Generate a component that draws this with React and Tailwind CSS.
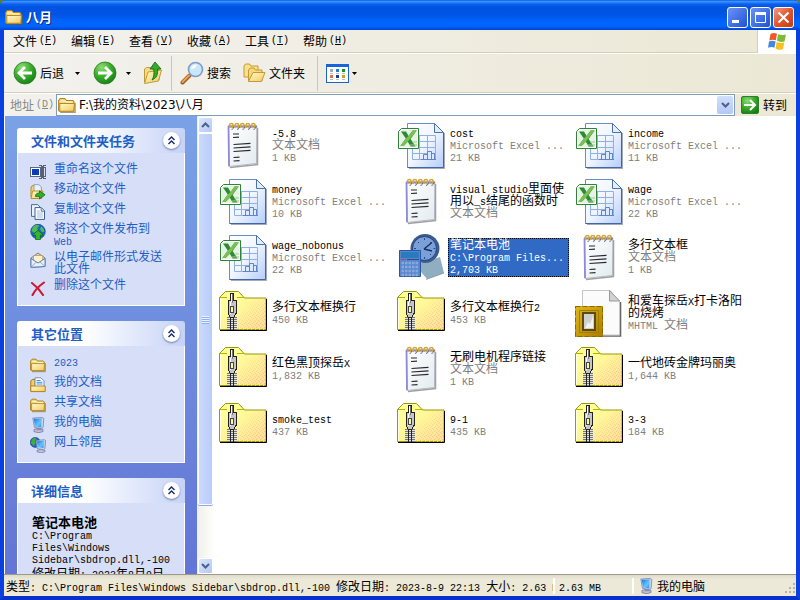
import { Fragment } from "react";

const FILES = [
  { icon: "text", name: "-5.8", lines: ["文本文档", "1 KB"] },
  { icon: "excel", name: "cost", lines: ["Microsoft Excel ...", "21 KB"] },
  { icon: "excel", name: "income", lines: ["Microsoft Excel ...", "11 KB"] },
  { icon: "excel", name: "money", lines: ["Microsoft Excel ...", "10 KB"] },
  { icon: "text", name: "visual studio里面使用以_s结尾的函数时", lines: ["文本文档"] },
  { icon: "excel", name: "wage", lines: ["Microsoft Excel ...", "22 KB"] },
  { icon: "excel", name: "wage_nobonus", lines: ["Microsoft Excel ...", "22 KB"] },
  { icon: "gadget", name: "笔记本电池", lines: ["C:\\Program Files...", "2,703 KB"], selected: true },
  { icon: "text", name: "多行文本框", lines: ["文本文档", "1 KB"] },
  { icon: "zip", name: "多行文本框换行", lines: ["450 KB"] },
  { icon: "zip", name: "多行文本框换行2", lines: ["453 KB"] },
  { icon: "mhtml", name: "和爱车探岳X打卡洛阳的烧烤", lines: ["MHTML 文档"] },
  { icon: "zip", name: "红色黑顶探岳X", lines: ["1,832 KB"] },
  { icon: "text", name: "无刷电机程序链接", lines: ["文本文档", "1 KB"] },
  { icon: "zip", name: "一代地砖金牌玛丽奥", lines: ["1,644 KB"] },
  { icon: "zip", name: "smoke_test", lines: ["437 KB"] },
  { icon: "zip", name: "9-1", lines: ["435 KB"] },
  { icon: "zip", name: "3-3", lines: ["184 KB"] },
];

const MENUS = [
  ["文件", "F"],
  ["编辑", "E"],
  ["查看", "V"],
  ["收藏", "A"],
  ["工具", "T"],
  ["帮助", "H"],
];

// Latin runs are set in a half-width mono so they take half a CJK cell
function T({ children }) {
  const runs = children.match(/[\x20-\x7e]+|[^\x20-\x7e]+/g) || [];
  return runs.map((run, i) =>
    /^[\x20-\x7e]/.test(run) ? (
      <span key={i} className="font-['Liberation_Mono',monospace] text-[10px] leading-none">{run}</span>
    ) : (
      <Fragment key={i}>{run}</Fragment>
    )
  );
}

/* ---------- icons ---------- */

function Defs() {
  return (
    <svg width="0" height="0" className="absolute" aria-hidden="true">
      <defs>
        <linearGradient id="folder" x1="0" y1="0" x2="1" y2="1">
          <stop offset="0" stopColor="#fffbd0" />
          <stop offset="1" stopColor="#f3c95c" />
        </linearGradient>
        <linearGradient id="sheet" x1="0" y1="0" x2="1" y2="1">
          <stop offset="0" stopColor="#ffffff" />
          <stop offset="0.5" stopColor="#f0f5ff" />
          <stop offset="1" stopColor="#b4cdfa" />
        </linearGradient>
        <linearGradient id="paper" x1="0" y1="0" x2="1" y2="1">
          <stop offset="0" stopColor="#ffffff" />
          <stop offset="1" stopColor="#e2ebef" />
        </linearGradient>
        <radialGradient id="green" cx="0.35" cy="0.25" r="0.8">
          <stop offset="0" stopColor="#8fdc78" />
          <stop offset="0.5" stopColor="#3caf2c" />
          <stop offset="1" stopColor="#148014" />
        </radialGradient>
        <linearGradient id="screen" x1="0" y1="0" x2="1" y2="1">
          <stop offset="0" stopColor="#1a76e0" />
          <stop offset="0.6" stopColor="#62c6ff" />
          <stop offset="1" stopColor="#2a90ea" />
        </linearGradient>
        <linearGradient id="gold" x1="0" y1="0" x2="1" y2="1">
          <stop offset="0" stopColor="#e0b81a" />
          <stop offset="0.5" stopColor="#c79a0a" />
          <stop offset="1" stopColor="#a87c00" />
        </linearGradient>
        <linearGradient id="zipBody" x1="0.3" y1="0.2" x2="1" y2="1">
          <stop offset="0" stopColor="#ffff99" />
          <stop offset="1" stopColor="#ffdf99" />
        </linearGradient>
        <pattern id="dither" width="4" height="4" patternUnits="userSpaceOnUse">
          <path d="M0 0h1v1h-1zM2 1h1v1h-1zM1 2h1v1h-1zM3 3h1v1h-1z" fill="#ffbf8c" />
        </pattern>
        <linearGradient id="fadeIn" x1="0.3" y1="0.2" x2="0.9" y2="0.9">
          <stop offset="0" stopColor="#000" />
          <stop offset="0.5" stopColor="#888" />
          <stop offset="1" stopColor="#fff" />
        </linearGradient>
        <mask id="ditherMask">
          <rect x="19" y="9" width="28" height="32" fill="url(#fadeIn)" />
        </mask>
      </defs>
    </svg>
  );
}

function FolderIcon({ size = 16 }) {
  return (
    <svg width={size} height={size} viewBox="0 0 16 16" className="shrink-0">
      <path d="M2 14.700h13.300V6" fill="none" stroke="#6d5a2a" strokeOpacity=".6" />
      <path d="M.6 13V4L2 2.200h4L7.600 4h5.600l1 1v8.600H1.600z" fill="#f6d77c" stroke="#b0821a" />
      <path d="M1.600 6.600h13l-.6 7H1.600z" fill="url(#folder)" stroke="#b88a22" strokeWidth=".9" />
      <path d="M2.200 4.500h4.300l1 .9h5.400" fill="none" stroke="#fffbe0" strokeWidth=".9" />
    </svg>
  );
}

function DocsIcon() {
  return (
    <svg width="16" height="16" viewBox="0 0 16 16" className="shrink-0">
      <path d="M.8 14V4l1.400-1.600h3V14z" fill="#f3cd63" stroke="#a87812" />
      <path d="M5 .8h6l3 3V12H5z" fill="#fff" stroke="#6486c0" strokeWidth=".9" />
      <path d="M6.500 3.500h4M6.500 5.300h6M6.500 7h6" stroke="#3a90e0" />
      <path d="M.8 9h14.400v5.600H.8z" fill="url(#folder)" stroke="#b0821a" />
    </svg>
  );
}

function ComputerIcon() {
  return (
    <svg width="16" height="16" viewBox="0 0 16 16" className="shrink-0">
      <path d="M4 12.500L9 11l4 1.500v2L9 15.700l-5-1z" fill="#c3c0da" stroke="#79759c" strokeWidth=".8" />
      <path d="M7 10.500h4l.8 2.700H6.600z" fill="#8f8bb5" />
      <path d="M2.800 1L12 .5l1.800.9-.7 9.200-1.700 1-6.900-1.200z" fill="#cdd4ea" stroke="#7a84b0" strokeWidth=".8" />
      <path d="M3.700 1.800l8-.4-.5 9-6.200-.9z" fill="url(#screen)" />
    </svg>
  );
}

function NetworkIcon() {
  return (
    <svg width="16" height="16" viewBox="0 0 16 16" className="shrink-0">
      <circle cx="5.200" cy="5.400" r="5" fill="#1e62cc" stroke="#123f8a" strokeWidth=".6" />
      <path d="M2 2.400c2-2 4.400-1.600 4.400-.4L4.800 4l1 2-2 3-3-3z" fill="#3fae3c" />
      <path d="M7 13.400l4-1 4 1v1.400l-4 1-4-1z" fill="#c3c0da" stroke="#79759c" strokeWidth=".7" />
      <path d="M6 3.400l8.400-.6 1.200.8-.7 8-1.400 1.100-6.200-1z" fill="#cdd4ea" stroke="#747eac" strokeWidth=".8" />
      <path d="M6.900 4.200l7.100-.4-.5 7.200-5.500-.7z" fill="url(#screen)" />
    </svg>
  );
}

function RenameIcon() {
  return (
    <svg width="16" height="16" viewBox="0 0 16 16" className="shrink-0" shapeRendering="crispEdges">
      <path d="M.5 3.500h10v9H.5z" fill="#fff" stroke="#5f6678" />
      <path d="M2 5h7v6H2z" fill="#0a3cc0" />
      <path d="M9 1h3v1h1V1h3v1h-2v12h2v1h-3v-1h-1v1H9v-1h2V2H9z" fill="#5a6072" />
      <path d="M14 3.500h1.500v9H14" fill="none" stroke="#5f6678" />
    </svg>
  );
}

function MoveIcon() {
  return (
    <svg width="16" height="16" viewBox="0 0 16 16" className="shrink-0">
      <path d="M1 13V3l2-1.600h3L7.400 3H11v10z" fill="#f5d67a" stroke="#b98a1c" />
      <path d="M4 .7h5L11.400 3V9H4z" fill="#e9f1fc" stroke="#7c93b8" strokeWidth=".8" />
      <path d="M1 14.500L2.600 7H13l-1.400 7.500z" fill="url(#folder)" stroke="#b98a1c" strokeWidth=".9" />
      <path d="M5.500 12.400c0-2.600 1.500-3.400 4-3.400V6.800l5.600 4-5.600 4.200v-2.500c-1.800 0-2.800.3-4-.1z" fill="#2fae2a" stroke="#0f6d14" strokeWidth=".8" />
    </svg>
  );
}

function CopyIcon() {
  return (
    <svg width="16" height="16" viewBox="0 0 16 16" className="shrink-0">
      <path d="M1.500.6h6.200L10 3v9.400H1.500z" fill="#e9f1fb" stroke="#4f6f98" />
      <path d="M5 3.600h6.400l3.100 3.200v8.600H5z" fill="#fff" stroke="#3e5f8c" />
      <path d="M11.200 4v3.200h3.200" fill="#cfe0f4" stroke="#3e5f8c" strokeWidth=".8" />
      <path d="M6.800 7h3M6.800 9h6M6.800 11h6M6.800 13h6" stroke="#8fb4dc" strokeWidth=".9" />
    </svg>
  );
}

function PublishIcon() {
  return (
    <svg width="16" height="16" viewBox="0 0 16 16" className="shrink-0">
      <circle cx="8" cy="7.600" r="7.300" fill="#1f66d0" stroke="#143f8c" strokeWidth=".7" />
      <path d="M3 3c3-3 6-2 6.400-1L7 4l1 2-3 3-3.600-2zM11 2.400c2 1 3.600 3 3.400 5.400L12 8l-2-3z" fill="#4cc04a" />
      <path d="M8 6.200l5.400 5h-3v4.400H5.600v-4.400h-3z" fill="#36b52e" stroke="#0d6a12" strokeWidth=".8" />
    </svg>
  );
}

function MailIcon() {
  return (
    <svg width="16" height="16" viewBox="0 0 16 16" className="shrink-0">
      <path d="M1 6l7-5 7 5v8.500l-14 .8z" fill="#c9d8ee" stroke="#5877aa" strokeWidth=".9" />
      <path d="M3.500 3.500h9.200V9L8 11 3.500 9z" fill="#fff2c4" stroke="#c8962a" strokeWidth=".8" />
      <path d="M1 6.500L8 11l7-4.500v8l-14 .8z" fill="#e6effb" stroke="#5877aa" strokeWidth=".9" />
      <path d="M1.200 15l5.200-5M14.800 14.300L10 10" stroke="#7d9bc8" strokeWidth=".8" />
    </svg>
  );
}

function DeleteIcon() {
  return (
    <svg width="16" height="16" viewBox="0 0 16 16" className="shrink-0">
      <path d="M2 3c4 3 8 7 11 12M14 2.500C9 6 5 10 2.500 15" fill="none" stroke="#cf1632" strokeWidth="2.100" strokeLinecap="round" />
    </svg>
  );
}

function ExcelFileIcon() {
  return (
    <svg width="48" height="48" viewBox="0 0 48 48" className="shrink-0">
      <path d="M12 47.500h35.500V12" fill="none" stroke="#33415f" strokeOpacity=".45" />
      <path d="M10.500 2.500h27l9 9v35h-36z" fill="url(#sheet)" stroke="#6a8fc4" />
      <path d="M46.500 11.500v35h-36" fill="none" stroke="#3f67a8" />
      <path d="M37.500 2.500v9h9z" fill="#e3edfc" stroke="#4b72ae" />
      <path d="M15.500 14.500h23v24h-23zM15.500 20.500h23M15.500 26.500h23M15.500 32.500h23M22.500 14.500v24M30.500 14.500v24" fill="none" stroke="#8fb0e4" />
      <path d="M26.500 38.500v-5h4v5M30.500 38.500v-8h4v8M34.500 38.500v-6h3v6M24 38.500h15" fill="#dce9ff" stroke="#5d86ca" />
      <path d="M4.500 7.500h17v20h-20v-17z" fill="#fff" stroke="#2d8338" />
      <path d="M5 9h15v17H3V11z" fill="#e7f3e2" />
      <path d="M4 10.500h5l2.600 4.500 4-5.500h4l-6 8.500 5 7.500h-5l-2.800-4.800L6.500 25H3.400l5.400-7.500z" fill="#2b8c34" />
      <path d="M11.600 15l4-5.500h4L10.800 20.700 6.500 25H3.400l5.400-7.500z" fill="#7cbf53" />
      <path d="M13 24h7M15 21h5" stroke="#9fcb92" />
    </svg>
  );
}

function TextFileIcon() {
  return (
    <svg width="48" height="48" viewBox="0 0 48 48" className="shrink-0">
      <path d="M11 46.500l27.500-3V7" fill="none" stroke="#444" strokeOpacity=".5" strokeWidth="1.500" />
      <path d="M9.500 5h28.300l-.3 37.500-27.500 3z" fill="url(#paper)" stroke="#a6a8b2" strokeWidth=".8" />
      <path d="M9.500 5l.5 40" stroke="#8f8ad8" strokeWidth="1.800" />
      <path d="M9 5.500h29" stroke="#8d87cf" strokeWidth="2" />
      {[0, 1, 2, 3, 4].map((i) => (
        <g key={i} transform={`translate(${i * 5.5} 0)`} fill="none">
          <path d="M14.500 4.500c1 2-.5 4-2 3.800" stroke="#5a52a0" />
          <path d="M11.500 6.500c-2-.5-1.500-4 1-4 2 0 2.200 3 .5 4.300" stroke="#d2a92c" strokeWidth="1.500" />
        </g>
      ))}
      <path d="M14 13h6M14 16.500l6-.3M14.500 23.500l17-1.200M14.500 27l17-1.200M14.500 30.500l17-1.200M14.500 36.500l6-.4M14.500 40l6-.4" stroke="#26292c" strokeWidth="1.200" />
    </svg>
  );
}

function ZipIcon() {
  return (
    <svg width="48" height="48" viewBox="0 0 48 48" className="shrink-0">
      <path d="M.5 40.500V8.500l6-6h13l6 6.500h21.500v31.500z" fill="url(#zipBody)" stroke="#999900" />
      <path d="M1.500 9v31" stroke="#ffffe0" />
      <path d="M19 9h28v32H19z" fill="url(#dither)" mask="url(#ditherMask)" />
      <path d="M1 8.500h7M18 8.500h8" stroke="#b3b300" />
      <path d="M1 41.500h46.500V10" fill="none" stroke="#000" />
      <g shapeRendering="crispEdges">
        <path d="M8 28h10v13H8z" fill="#e4e4d8" />
        <path d="M8 28.500h10M8 30.500h10M8 32.500h10M8 34.500h10M8 36.500h10M8 38.500h10M8 40.500h10" stroke="#777" />
        <path d="M11.500 28v13M14.500 28v13" stroke="#222" />
        <path d="M10.500 11.500h1v-7h3v7h2.500v13l-2 3.500h-4l-2-3.500 0-13z" fill="#c6c6c6" stroke="#222" />
        <path d="M11 13h1v12h-1zM12 5h1v8h-1z" fill="#fff" />
        <path d="M11.500 17.500h3v6h-3z" fill="#f8f8a8" stroke="#444" />
        <path d="M13 5h1v9h-1z" fill="#777" />
      </g>
    </svg>
  );
}

function MhtmlIcon() {
  return (
    <svg width="48" height="48" viewBox="0 0 48 48" className="shrink-0">
      <path d="M9 47h36.500V13" fill="none" stroke="#666" strokeWidth="1.600" />
      <path d="M7.500 1.500H35L44.500 12v34h-37z" fill="#fbfbfb" stroke="#c6c6c6" />
      <path d="M34.500 1.500V12h10z" fill="#d2d2d2" stroke="#999" />
      <path d="M0 17h28v31H0z" fill="url(#gold)" />
      <path d="M.5 17.500h27v30H.5z" fill="none" stroke="#8a6700" strokeDasharray="5 2" />
      <path d="M4.500 21.500h19v22h-19z" fill="none" stroke="#a37c05" />
      <path d="M8 24h12v17H8z" fill="#cfcfcf" stroke="#5e4a0c" strokeWidth="2" />
      <path d="M10 39l3-6 2 2 3-8v12z" fill="#f2f2f2" />
    </svg>
  );
}

function GadgetIcon() {
  return (
    <svg width="48" height="48" viewBox="0 0 48 48" className="shrink-0">
      <path d="M24 30l19-6 4 16-17 6-6-7z" fill="#8fafc0" />
      <path d="M29 46.500l18-6.500" stroke="#5d7c96" strokeOpacity=".6" />
      <circle cx="28" cy="15.500" r="14.500" fill="#3b5c90" />
      <circle cx="27.500" cy="15.500" r="12" fill="#7ba0d8" stroke="#24427c" />
      <path d="M27 16l8-6.500M27 16l8 2" stroke="#17305f" strokeWidth="1.400" />
      <path d="M27.500 5v2M27.500 24v2M17 15.500h2M36.500 15.500h2M21 9l1 1M34 9l-1 1M21 22l1-1M34 22l-1-1" stroke="#2a4a85" />
      <path d="M2.500 17.500h21v26h-21z" fill="#5a86cc" stroke="#2a57a2" />
      <path d="M4 19h18v6H4z" fill="#2a7ac0" />
      <path d="M4 26.500h5" stroke="#a74a72" />
      <path d="M10 26.500h12" stroke="#2c4d8c" />
      {[30, 34, 38, 42].map((y) => (
        <path key={y} d={`M4.500 ${y}h17`} stroke="#86aae0" strokeWidth="2.400" strokeDasharray="2.500 1" />
      ))}
    </svg>
  );
}

const FILE_ICONS = {
  text: TextFileIcon,
  excel: ExcelFileIcon,
  zip: ZipIcon,
  mhtml: MhtmlIcon,
  gadget: GadgetIcon,
};

function ArrowCircle({ back }) {
  return (
    <svg width="24" height="24" viewBox="0 0 24 24" className="shrink-0">
      <circle cx="12" cy="12" r="11" fill="url(#green)" stroke="#2c7a28" strokeWidth=".8" />
      <path
        d={back ? "M19 12H7M12 6l-6 6 6 6" : "M5 12h12M12 6l6 6-6 6"}
        fill="none"
        stroke="#fff"
        strokeWidth="2.800"
      />
    </svg>
  );
}

function UpFolderIcon() {
  return (
    <svg width="20" height="24" viewBox="0 0 20 24" className="shrink-0">
      <path d="M1.500 21V8l2-1.500h4L9 8h7v11z" fill="#f6dc86" stroke="#c19a3a" />
      <path d="M1.500 22.500L5 11l13.500-2-3 11z" fill="url(#folder)" stroke="#c19a3a" />
      <path d="M12 1l6 7h-3.500c.5 6-1 9-5.500 11 2-3 2.200-6 1.800-11H7z" fill="#35ac2c" stroke="#147018" strokeWidth=".9" />
    </svg>
  );
}

function SearchIcon() {
  return (
    <svg width="24" height="24" viewBox="0 0 24 24" className="shrink-0">
      <path d="M2.500 21.500l7-7" stroke="#9c5a22" strokeWidth="4" strokeLinecap="round" />
      <path d="M2.500 21l6.500-6.500" stroke="#f0a257" strokeWidth="2" strokeLinecap="round" />
      <circle cx="15.500" cy="8.500" r="7" fill="#c9e7fb" stroke="#7f9cc4" strokeWidth="1.600" />
      <path d="M11 8a5 5 0 0 1 6-4.500c-1 3-3 4.500-6 4.500z" fill="#fff" />
    </svg>
  );
}

function FoldersIcon() {
  return (
    <svg width="23" height="20" viewBox="0 0 23 20" className="shrink-0">
      <path d="M1 14V3l1.500-2h4L8 3h7v11z" fill="#f8e08e" stroke="#c59a34" />
      <path d="M5.500 18V7L7 5h4l1.500 2H19v11z" fill="#f6d77c" stroke="#c59a34" />
      <path d="M5.500 18.500L10 9.500h12l-3.500 9z" fill="url(#folder)" stroke="#c59a34" />
    </svg>
  );
}

function ViewsIcon() {
  return (
    <svg width="23" height="19" viewBox="0 0 23 19" className="shrink-0" shapeRendering="crispEdges">
      <path d="M.5.500h22v18H.5z" fill="#fff" stroke="#1c62cc" />
      <path d="M0 0h23v3H0z" fill="#1a63d8" />
      <path d="M4 5h3v3H4z" fill="#a9a5bd" />
      <path d="M10 5h3v3h-3z" fill="#1f7ad8" />
      <path d="M16 5h3v3h-3z" fill="#168f35" />
      <path d="M4 11h3v3H4z" fill="#e8703a" />
      <path d="M10 11h3v3h-3z" fill="#143a94" />
      <path d="M16 11h3v3h-3z" fill="#cfa01e" />
      <path d="M4 9.500h3M10 9.500h3M16 9.500h3M4 15.500h3M10 15.500h3M16 15.500h3" stroke="#b9bcc9" />
    </svg>
  );
}

function FlagIcon() {
  return (
    <svg width="20" height="19" viewBox="0 0 20 19">
      <path d="M3.500 2C6 .5 8 .8 10 1.800L8.800 8.300C6.500 7.500 4.500 7.500 2.300 8.500z" fill="#ee5a26" />
      <path d="M11 2.200c2.500 1 5 1 8 .2l-1.500 7c-2.500.8-5 .6-7.500-.6z" fill="#7cbb35" />
      <path d="M2 9.500c2.500-1 4.500-.8 6.600 0l-1.200 6.300c-2.200-1-4.200-.9-6.400 0z" fill="#4289e4" />
      <path d="M9.700 10c2.500 1.100 5 1.200 7.600.5L16 17c-2.500 1-5 .8-7.500-.6z" fill="#f8c01c" />
    </svg>
  );
}

function Caret() {
  return (
    <svg width="5" height="3" viewBox="0 0 5 3" className="shrink-0">
      <path d="M0 0h5L2.500 3z" fill="#000" />
    </svg>
  );
}

function Chevron({ up }) {
  return (
    <svg width="9" height="6" viewBox="0 0 9 6">
      <path d={up ? "M1 5l3.500-3.500L8 5" : "M1 1l3.500 3.500L8 1"} fill="none" stroke="#4d6185" strokeWidth="2" />
    </svg>
  );
}

/* ---------- window parts ---------- */

const captionButton = "flex h-[21px] w-[21px] items-center justify-center rounded-[3px] border border-white";

function TitleBar() {
  return (
    <header className="flex h-[30px] shrink-0 items-center rounded-t-md bg-[linear-gradient(180deg,#0a5be8_0%,#3a92ff_5%,#0a60ee_14%,#0052e0_25%,#0055e6_50%,#0066ff_75%,#0064fb_88%,#0043cf_100%)] pt-1 pr-1.5 pl-[5px]">
      <FolderIcon size={18} />
      <h1 className="flex-1 pl-[3px] text-[13px] leading-4 font-bold text-white [text-shadow:1px_1px_0_#0a2a80]">八月</h1>
      <div className="flex gap-0.5">
        <button aria-label="最小化" className={`${captionButton} bg-linear-to-br from-[#6c93f4] to-[#1f50d8]`}>
          <svg width="13" height="13" viewBox="0 0 13 13">
            <path d="M1 9h7v3H1z" fill="#fff" />
          </svg>
        </button>
        <button aria-label="最大化" className={`${captionButton} bg-linear-to-br from-[#6c93f4] to-[#1f50d8]`}>
          <svg width="13" height="13" viewBox="0 0 13 13">
            <path d="M1.500 2.500h10v9h-10z" fill="none" stroke="#fff" />
            <path d="M1 1h11v3H1z" fill="#fff" />
          </svg>
        </button>
        <button aria-label="关闭" className={`${captionButton} bg-linear-to-br from-[#f09a80] via-[#e2542c] to-[#c63a10]`}>
          <svg width="13" height="13" viewBox="0 0 13 13">
            <path d="M1.500 1.500l10 10M11.500 1.500l-10 10" stroke="#fff" strokeWidth="2.200" />
          </svg>
        </button>
      </div>
    </header>
  );
}

const barBg = "bg-linear-to-r from-[#f2f1ee] to-[#ece8d5]";

function MenuBar() {
  return (
    <nav className={`flex h-6 shrink-0 border-b border-white ${barBg}`}>
      <div className="flex flex-1 border-b border-[#d5cfba] pl-px">
        {MENUS.map(([label, key]) => (
          <button key={key} className="flex w-[58px] items-center gap-0.5 pl-2 leading-4 whitespace-nowrap">
            {label}
            <span className="font-['Liberation_Mono',monospace] text-[10px]">
              (<u>{key}</u>)
            </span>
          </button>
        ))}
      </div>
      <div className="flex w-[39px] items-center justify-center border-l border-[#d5cfba] bg-white">
        <FlagIcon />
      </div>
    </nav>
  );
}

function Toolbar() {
  return (
    <div className={`h-10 shrink-0 border-b border-white ${barBg}`}>
      <div className="flex h-full items-center border-b border-[#d5cfba] pl-[9px] leading-4 whitespace-nowrap">
        <button className="flex items-center gap-[3px]">
          <ArrowCircle back />
          后退
        </button>
        <button aria-label="后退选项" className="flex w-[26px] justify-center">
          <Caret />
        </button>
        <button aria-label="前进" className="ml-[3px]">
          <ArrowCircle />
        </button>
        <button aria-label="前进选项" className="flex w-[22px] justify-center">
          <Caret />
        </button>
        <button aria-label="向上" className="ml-1">
          <UpFolderIcon />
        </button>
        <div className="mx-2 h-[35px] w-px bg-[#cdc7b0]" />
        <button className="flex items-center gap-[3px]">
          <SearchIcon />
          搜索
        </button>
        <button className="ml-3 flex items-center gap-[3px]">
          <FoldersIcon />
          文件夹
        </button>
        <div className="mr-2 ml-3 h-[35px] w-px bg-[#cdc7b0]" />
        <button aria-label="查看" className="flex items-center gap-[3px]">
          <ViewsIcon />
          <Caret />
        </button>
      </div>
    </div>
  );
}

function AddressBar() {
  return (
    <div className={`flex h-[22px] shrink-0 items-center leading-4 ${barBg}`}>
      <label htmlFor="address" className="flex w-[52px] items-center gap-0.5 pl-1.5 whitespace-nowrap text-[#8a887c]">
        地址
        <span className="font-['Liberation_Mono',monospace] text-[10px]">
          (<u>D</u>)
        </span>
      </label>
      <div className="flex h-full flex-1 items-center border border-[#7f9db9] bg-white px-px">
        <FolderIcon size={18} />
        <input
          id="address"
          defaultValue="F:\我的资料\2023\八月"
          className="min-w-0 flex-1 pl-[3px] font-['DejaVu_Sans','Noto_Sans_CJK_SC',sans-serif] leading-4 outline-none"
        />
        <button aria-label="展开地址" className="flex h-[18px] w-4 items-center justify-center rounded-xs bg-linear-to-b from-[#d0dffc] to-[#b3c8f5]">
          <Chevron />
        </button>
      </div>
      <button className="flex w-[61px] items-center gap-1 pl-1.5 whitespace-nowrap">
        <svg width="18" height="18" viewBox="0 0 18 18" className="shrink-0">
          <rect x=".5" y=".5" width="17" height="17" rx="1.500" fill="url(#green)" stroke="#2f7d2c" />
          <path d="M3 9h11M9 4l5 5-5 5" fill="none" stroke="#fff" strokeWidth="2" />
        </svg>
        转到
      </button>
    </div>
  );
}

// compact text blocks: mono first in the stack keeps every line at 12px
const compactText = "font-['Liberation_Mono','Noto_Sans_CJK_SC',monospace] leading-3";

function Panel({ title, children }) {
  return (
    <section>
      <div className="flex h-[25px] items-center justify-between rounded-t-[3px] bg-linear-to-r from-white from-40% to-[#c6d3f7] pr-[5px] pl-3.5">
        <h2 className="text-[13px] leading-4 font-bold text-[#215dc6]">{title}</h2>
        <button aria-label={`折叠${title}`} className="flex h-[17px] w-[17px] items-center justify-center rounded-full bg-white shadow-[0_1px_2px_#6c7cae]">
          <svg width="9" height="9" viewBox="0 0 9 9">
            <path d="M1.500 4L4.500 1l3 3M1.500 8L4.500 5l3 3" fill="none" stroke="#15296b" strokeWidth="1.400" />
          </svg>
        </button>
      </div>
      <div className={`border border-t-0 border-white bg-[#d6dff7] ${compactText}`}>{children}</div>
    </section>
  );
}

function LinkList({ items }) {
  return (
    <ul className="flex flex-col gap-1 pt-[11px] pr-[19px] pb-[9px] pl-3">
      {items.map(([Icon, label]) => (
        <li key={label}>
          <a href="#" className="flex min-h-4 items-start gap-2 text-[#215dc6]">
            <Icon />
            <span>
              <T>{label}</T>
            </span>
          </a>
        </li>
      ))}
    </ul>
  );
}

function Sidebar() {
  return (
    <aside className="ml-px flex w-48 shrink-0 flex-col gap-[15px] overflow-hidden bg-linear-to-b from-[#7ba2e7] to-[#6375d6] px-3 pt-3">
      <Panel title="文件和文件夹任务">
        <LinkList
          items={[
            [RenameIcon, "重命名这个文件"],
            [MoveIcon, "移动这个文件"],
            [CopyIcon, "复制这个文件"],
            [PublishIcon, "将这个文件发布到Web"],
            [MailIcon, "以电子邮件形式发送此文件"],
            [DeleteIcon, "删除这个文件"],
          ]}
        />
      </Panel>
      <Panel title="其它位置">
        <LinkList
          items={[
            [FolderIcon, "2023"],
            [DocsIcon, "我的文档"],
            [FolderIcon, "共享文档"],
            [ComputerIcon, "我的电脑"],
            [NetworkIcon, "网上邻居"],
          ]}
        />
      </Panel>
      <Panel title="详细信息">
        <div className="pt-[15px] pr-3 pb-3 pl-3.5">
          <h3 className="text-[13px] leading-3 font-bold">笔记本电池</h3>
          <p>
            <T>{"C:\\Program Files\\Windows Sidebar\\sbdrop.dll,-100"}</T>
          </p>
          <p className="mt-[3px]">
            <T>修改日期: 2023年8月9日</T>
          </p>
        </div>
      </Panel>
    </aside>
  );
}

function ScrollBar() {
  const arrow = "flex h-4 shrink-0 items-center justify-center rounded-xs border border-white bg-linear-to-br from-[#dbe6fe] to-[#b4c8f6]";
  return (
    <div className="flex w-[17px] shrink-0 flex-col bg-linear-to-r from-[#f0f0ea] to-[#fefefb] px-px pt-px">
      <button aria-label="向上滚动" className={arrow}>
        <Chevron up />
      </button>
      <div className="flex flex-[7] flex-col items-center justify-center gap-px rounded-xs border border-white bg-linear-to-r from-[#cad9fd] to-[#b9cdfa] shadow-[0_1px_0_#8ea9dc]">
        {[0, 1, 2, 3].map((i) => (
          <div key={i} className="h-px w-[7px] bg-[#eef4fe] shadow-[0_1px_0_#8cadf0]" />
        ))}
      </div>
      <div className="flex-1" />
      <button aria-label="向下滚动" className={arrow}>
        <Chevron />
      </button>
    </div>
  );
}

function FileItem({ file }) {
  const Icon = FILE_ICONS[file.icon];
  return (
    <li>
      <button className="flex h-14 w-full items-center gap-[3px] text-left">
        <Icon />
        <div
          className={
            file.selected
              ? "w-[121px] border border-dotted border-black bg-[#316ac5] px-px pt-px text-white"
              : "w-[121px] border border-transparent px-px pt-px"
          }
        >
          <p>
            <T>{file.name}</T>
          </p>
          {file.lines.map((line) => (
            <p key={line} className={file.selected ? "whitespace-nowrap" : "whitespace-nowrap text-[#808080]"}>
              <T>{line}</T>
            </p>
          ))}
        </div>
      </button>
    </li>
  );
}

function StatusBar() {
  return (
    <footer className="flex h-[22px] shrink-0 items-center border-t border-[#9c9a8c] bg-linear-to-b from-[#dedbcb] to-[#ece9d8] to-20% leading-4 whitespace-nowrap">
      <div className="min-w-0 flex-1 overflow-hidden pl-0.5">
        <T>{"类型: C:\\Program Files\\Windows Sidebar\\sbdrop.dll,-100 修改日期: 2023-8-9 22:13 大小: 2.63 MB"}</T>
      </div>
      <div className="w-[79px] border-l-2 border-white pl-1">
        <T>2.63 MB</T>
      </div>
      <div className="flex w-[164px] items-center gap-[3px] border-l-2 border-white pl-1">
        <ComputerIcon />
        <span className="flex-1">我的电脑</span>
        <svg width="12" height="12" viewBox="0 0 12 12" className="self-end">
          <path d="M9 1h2v2H9zM5 5h2v2H5zM9 5h2v2H9zM1 9h2v2H1zM5 9h2v2H5zM9 9h2v2H9z" fill="#b8b4a2" />
        </svg>
      </div>
    </footer>
  );
}

export default function App() {
  return (
    <div className="h-screen bg-[#5d7f2c] font-['Noto_Sans_CJK_SC',sans-serif] text-xs text-black">
      <Defs />
      <div className="flex h-full flex-col rounded-t-md bg-[#0841d8]">
        <TitleBar />
        <div className="flex min-h-0 flex-1 flex-col border-x-4 border-b-4 border-x-[#0a3fe0] border-b-[#0831c9]">
          <MenuBar />
          <Toolbar />
          <AddressBar />
          <main className="flex min-h-0 flex-1 bg-white">
            <Sidebar />
            <ScrollBar />
            <ul className={`grid min-w-0 flex-1 grid-cols-[repeat(auto-fill,178px)] content-start overflow-hidden pt-px pl-[5px] ${compactText}`}>
              {FILES.map((file) => (
                <FileItem key={file.name} file={file} />
              ))}
            </ul>
          </main>
          <StatusBar />
        </div>
      </div>
    </div>
  );
}
